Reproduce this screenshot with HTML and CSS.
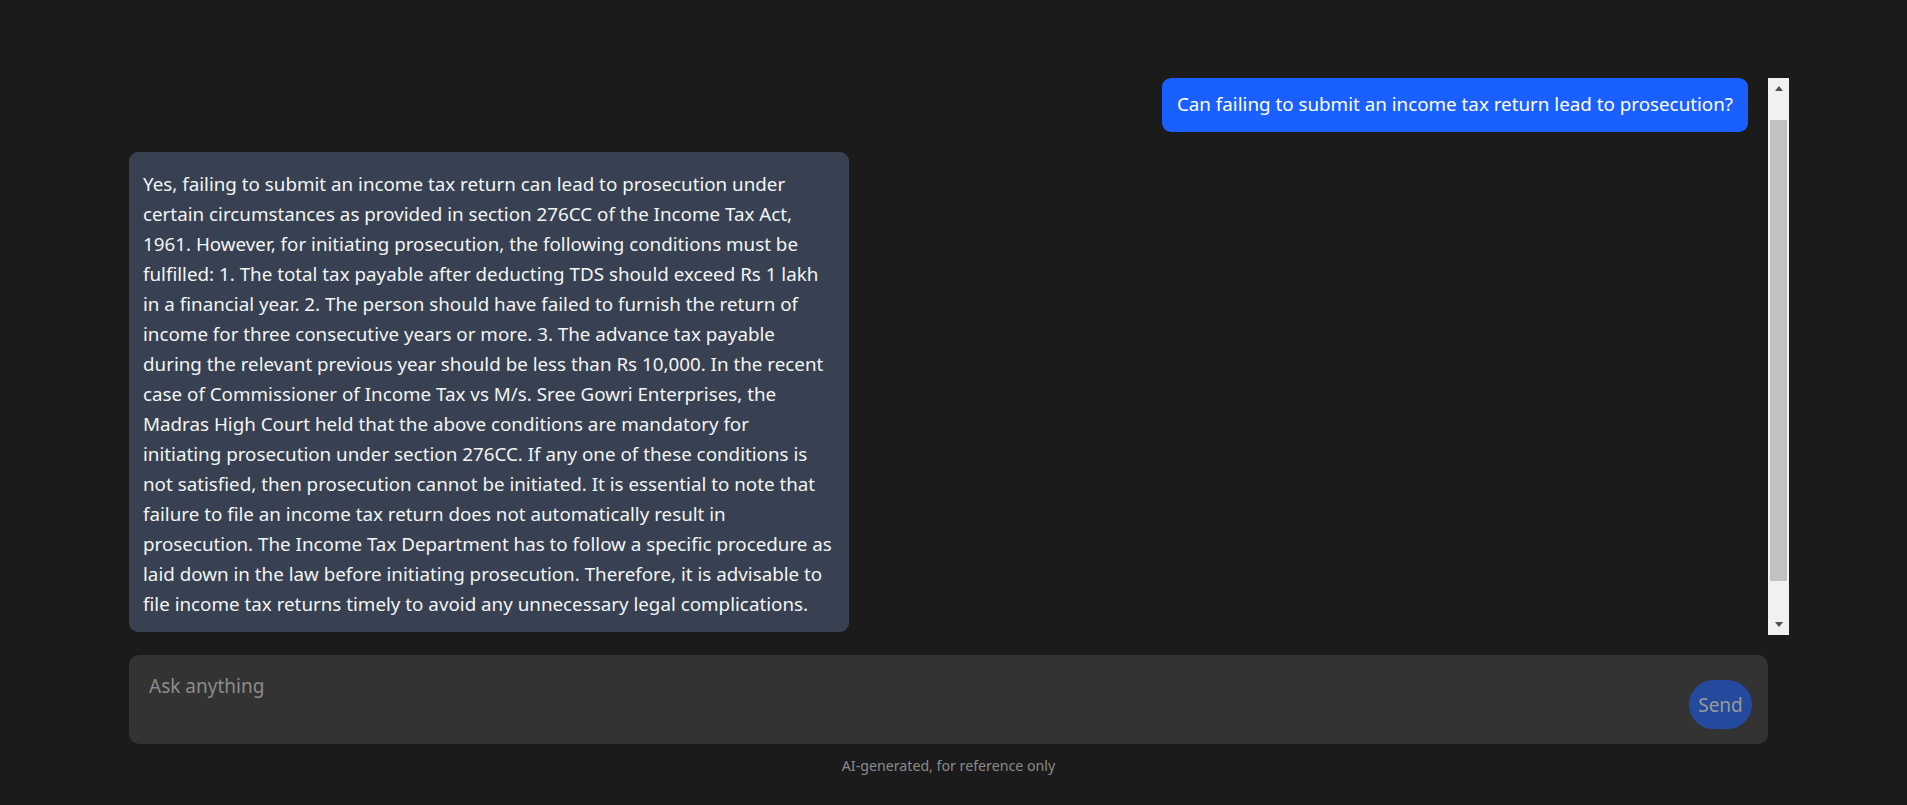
FILE: index.html
```html
<!DOCTYPE html>
<html lang="en">
<head>
<meta charset="utf-8">
<title>Chat</title>
<link rel="stylesheet" href="styles.css">
</head>
<body>
<div class="app">
  <div class="messages-wrap">
    <div class="messages">
      <div class="row row-user">
        <div class="bubble bubble-user">Can failing to submit an income tax return lead to prosecution?</div>
      </div>
      <div class="row row-ai">
        <div class="bubble bubble-ai">Yes, failing to submit an income tax return can lead to prosecution under<br>certain circumstances as provided in section 276CC of the Income Tax Act,<br>1961. However, for initiating prosecution, the following conditions must be<br>fulfilled: 1. The total tax payable after deducting TDS should exceed Rs 1 lakh<br>in a financial year. 2. The person should have failed to furnish the return of<br>income for three consecutive years or more. 3. The advance tax payable<br>during the relevant previous year should be less than Rs 10,000. In the recent<br>case of Commissioner of Income Tax vs M/s. Sree Gowri Enterprises, the<br>Madras High Court held that the above conditions are mandatory for<br>initiating prosecution under section 276CC. If any one of these conditions is<br>not satisfied, then prosecution cannot be initiated. It is essential to note that<br>failure to file an income tax return does not automatically result in<br>prosecution. The Income Tax Department has to follow a specific procedure as<br>laid down in the law before initiating prosecution. Therefore, it is advisable to<br>file income tax returns timely to avoid any unnecessary legal complications.</div>
      </div>
    </div>
    <div class="scrollbar">
      <div class="sb-btn"><span class="tri tri-up"></span></div>
      <div class="sb-track"><div class="sb-thumb"></div></div>
      <div class="sb-btn"><span class="tri tri-down"></span></div>
    </div>
  </div>
  <div class="composer">
    <div class="placeholder">Ask anything</div>
    <button class="send">Send</button>
  </div>
  <div class="footer">AI-generated, for reference only</div>
</div>
</body>
</html>
```
FILE: styles.css
```css
* { box-sizing: border-box; }
html, body { margin: 0; padding: 0; }
body {
  background: #1b1b1b;
  font-family: "Noto Sans", "Open Sans", sans-serif;
  color: #f3f4f6;
  height: 805px;
  overflow: hidden;
}
.app {
  padding: 78px 118px 0 129px;
  display: flex;
  flex-direction: column;
}
.messages-wrap {
  display: flex;
  height: 557px;
}
.messages {
  flex: 1;
  display: flex;
  flex-direction: column;
  gap: 20px;
  padding-right: 20px;
}
.row { display: flex; }
.row-user { justify-content: flex-end; }
.row-ai { justify-content: flex-start; }
.bubble {
  font-size: 18.8px;
  line-height: 30px;
  border-radius: 9px;
}
.bubble-user {
  background: #1a5fff;
  color: #ffffff;
  padding: 11px 15px 13px;
}
.bubble-ai {
  background: #374151;
  color: #f3f4f6;
  width: 720px;
  padding: 17px 10px 13px 14px;
  white-space: nowrap;
}
.scrollbar {
  width: 21px;
  background: #f1f1f1;
  display: flex;
  flex-direction: column;
}
.sb-btn {
  height: 21px;
  display: flex;
  align-items: center;
  justify-content: center;
}
.sb-track {
  flex: 1;
  padding: 21px 2px 33px;
  display: flex;
}
.sb-thumb {
  flex: 1;
  background: #c1c1c1;
}
.tri { width: 0; height: 0; border-left: 4px solid transparent; border-right: 4px solid transparent; }
.tri-up { border-bottom: 5px solid #505050; }
.tri-down { border-top: 5px solid #505050; }
.composer {
  margin-top: 20px;
  width: 1639px;
  height: 89px;
  background: #333333;
  border-radius: 10px;
  padding: 18px 16px 15px 20px;
  display: flex;
  justify-content: space-between;
  align-items: flex-end;
}
.placeholder {
  align-self: flex-start;
  color: #8c8c8c;
  font-size: 19px;
  line-height: 26px;
}
.send {
  width: 63px;
  height: 49px;
  border: none;
  border-radius: 25px;
  background: #234a9c;
  color: #9a9a9a;
  font-family: "Noto Sans", sans-serif;
  font-size: 19px;
  padding: 0;
}
.footer {
  width: 1639px;
  text-align: center;
  margin-top: 12px;
  font-size: 14.2px;
  color: #8a8a8a;
}
```
